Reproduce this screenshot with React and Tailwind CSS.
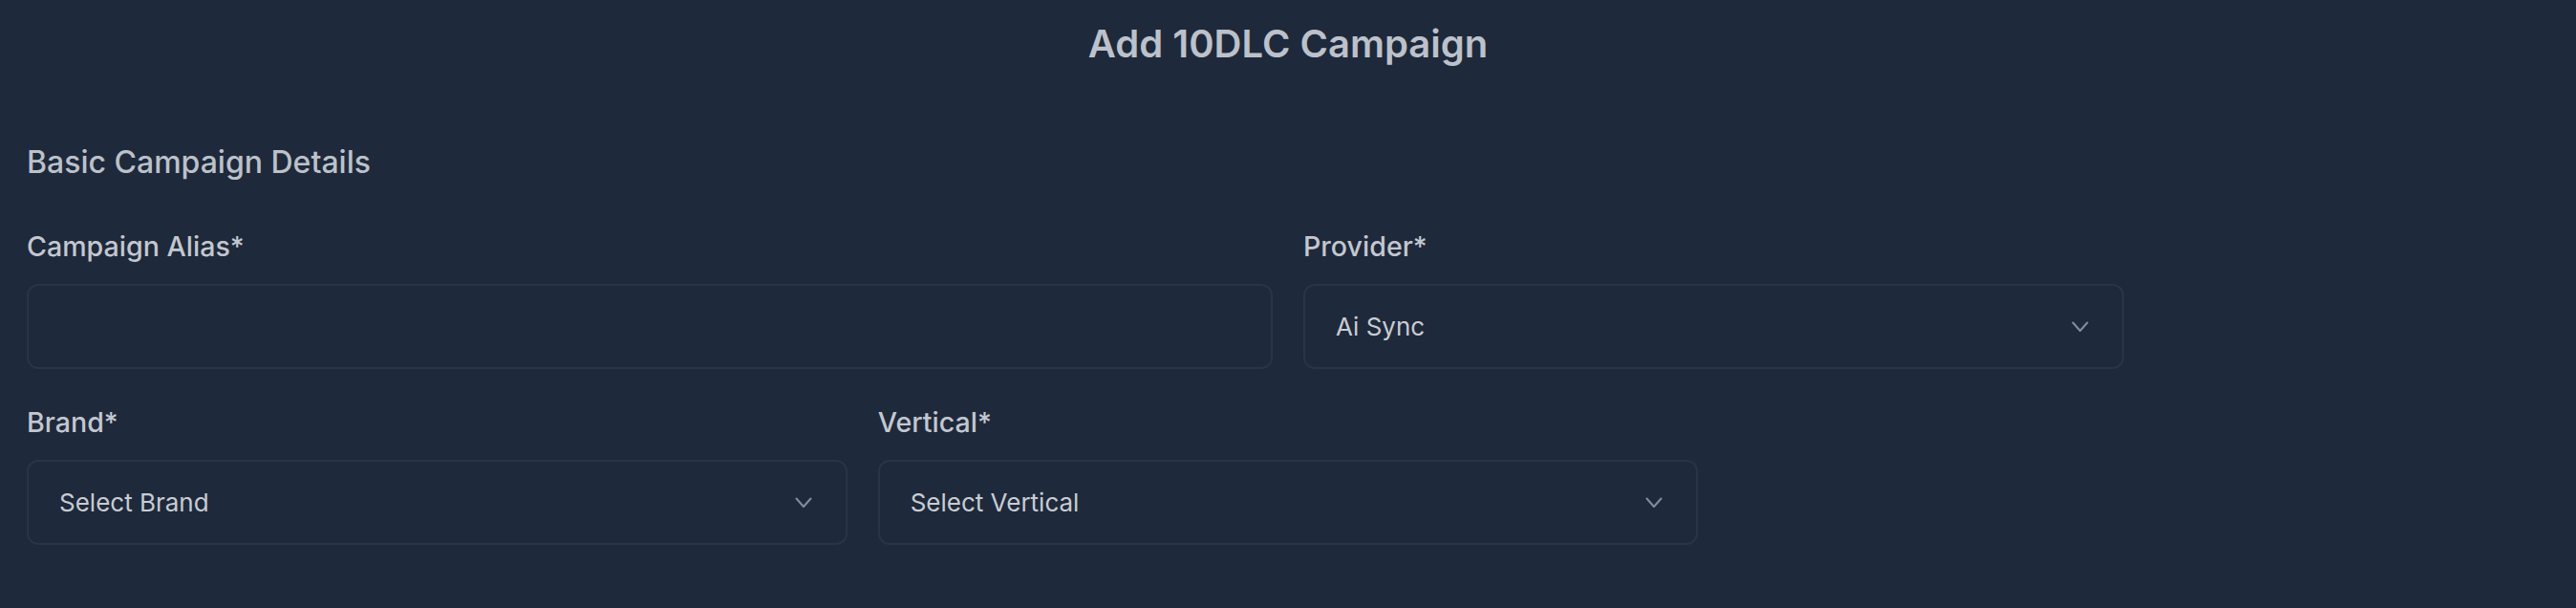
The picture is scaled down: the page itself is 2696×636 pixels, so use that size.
import React from 'react';

const Label = ({ children }) => (
  <label className="text-[28.6px] leading-[34px] font-medium text-[#c3c7cf]">{children}</label>
);

const Chevron = () => (
  <svg width="18" height="12" viewBox="0 0 18 12" fill="none" className="text-[#858d99]">
    <path d="M1.5 1.5 L9 10 L16.5 1.5" stroke="currentColor" strokeWidth="2" strokeLinecap="round" strokeLinejoin="round" />
  </svg>
);

const SelectBox = ({ value }) => (
  <div className="h-[89px] rounded-xl border-2 border-[#283448] bg-[#1e293b] flex items-center justify-between pl-[32px] pr-[35px]">
    <span className="text-[26px] text-[#c8ccd3]">{value}</span>
    <Chevron />
  </div>
);

const App = () => {
  return (
    <div
      className="min-h-[636px] bg-[#1e293b] px-[28px] pt-[22px]"
      style={{ fontFamily: 'Inter, "Noto Sans", sans-serif' }}
    >
      <h1 className="text-center text-[40px] leading-[48px] font-semibold text-[#bcc1ca]">
        Add 10DLC Campaign
      </h1>

      <h2 className="mt-[80px] text-[32px] leading-[40px] font-medium text-[#bcc1ca]">
        Basic Campaign Details
      </h2>

      <div className="mt-[51px] grid grid-cols-6 gap-x-8 gap-y-[39px]">
        <div className="col-span-3 flex flex-col gap-[22px]">
          <Label>Campaign Alias*</Label>
          <input
            type="text"
            className="h-[89px] rounded-xl border-2 border-[#283448] bg-[#1e293b] px-[32px] text-[26px] text-[#c8ccd3] outline-none"
          />
        </div>
        <div className="col-span-2 flex flex-col gap-[22px]">
          <Label>Provider*</Label>
          <SelectBox value="Ai Sync" />
        </div>
        <div className="col-span-1" />

        <div className="col-span-2 flex flex-col gap-[22px]">
          <Label>Brand*</Label>
          <SelectBox value="Select Brand" />
        </div>
        <div className="col-span-2 flex flex-col gap-[22px]">
          <Label>Vertical*</Label>
          <SelectBox value="Select Vertical" />
        </div>
      </div>
    </div>
  );
};

export default App;
